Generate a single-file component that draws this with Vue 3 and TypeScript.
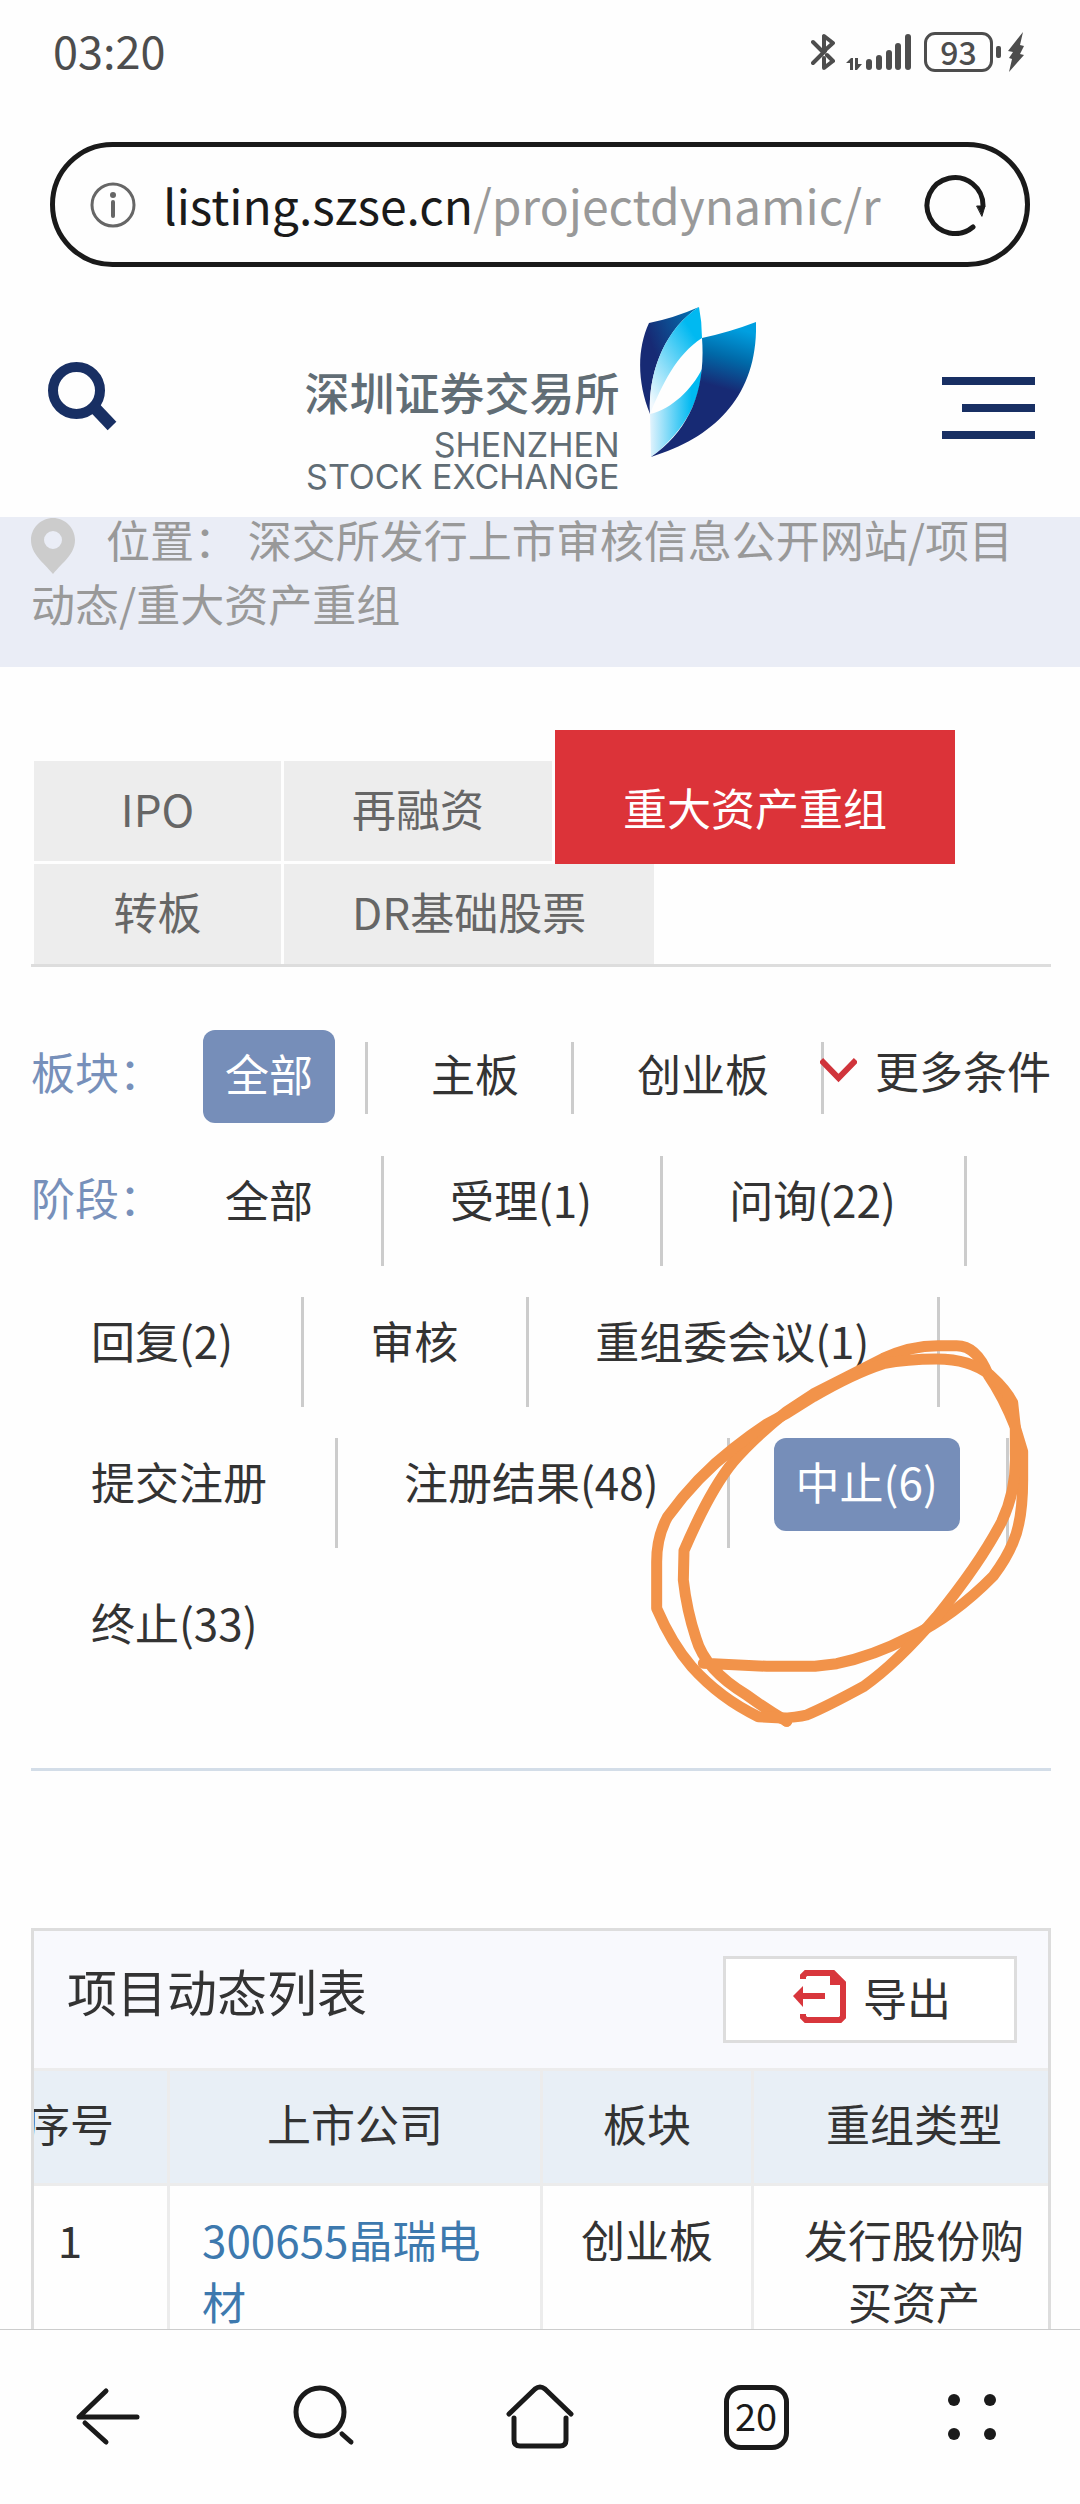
<script setup lang="ts">
import { ref } from 'vue'

interface Stage {
  name: string
  count?: number
}

interface Project {
  index: number
  company: string
  board: string
  kind: string
}

const tabs: string[] = ['IPO', '再融资', '重大资产重组', '转板', 'DR基础股票']
const boards: string[] = ['全部', '主板', '创业板']
const stages: Stage[] = [
  { name: '全部' },
  { name: '受理', count: 1 },
  { name: '问询', count: 22 },
  { name: '回复', count: 2 },
  { name: '审核' },
  { name: '重组委会议', count: 1 },
  { name: '提交注册' },
  { name: '注册结果', count: 48 },
  { name: '中止', count: 6 },
  { name: '终止', count: 33 },
]
const projects: Project[] = [
  { index: 1, company: '300655晶瑞电材', board: '创业板', kind: '发行股份购买资产' },
]

const activeTab = ref('重大资产重组')
const activeBoard = ref('全部')
const activeStage = ref('中止')

const stageLabel = (s: Stage): string => (s.count === undefined ? s.name : `${s.name}(${s.count})`)
</script>

<template>
  <div class="screen">
    <div class="status">
      <span class="clock">03:20</span>
      <div class="indicators">
        <svg class="bluetooth" width="24" height="38" viewBox="0 0 24 38" fill="none" stroke="#4d4d4d" stroke-width="4" stroke-linejoin="round" stroke-linecap="round">
          <path d="M2 9 L12 19 L22 10 L13 3 V17" />
          <path d="M2 30 L14 18 M13 25 V35 L22 28 L16 22" />
        </svg>
        <svg class="signal" width="66" height="38" viewBox="0 0 66 38" fill="#4d4d4d">
          <path d="M0 30 L5 25 H7 V37 H4 V30 Z M9 25 H12 V31 H16 L11 37 H9 Z" />
          <rect x="20" y="26" width="6" height="11" rx="3" />
          <rect x="30" y="22" width="6" height="15" rx="3" />
          <rect x="40" y="17" width="6" height="20" rx="3" />
          <rect x="49" y="10" width="6" height="27" rx="3" />
          <rect x="59" y="1" width="6" height="36" rx="3" />
        </svg>
        <span class="battery">93</span>
        <span class="battery-tip"></span>
        <svg class="bolt" width="16" height="40" viewBox="0 0 16 40" fill="#4d4d4d">
          <path d="M15 0 L0 19 L5 20 L1 26 L4 27 L1 40 L16 23 L12 22 L16 14 L12 13 Z" />
        </svg>
      </div>
    </div>

    <div class="address">
      <button class="round" type="button" aria-label="网站信息">
        <svg width="46" height="46" viewBox="0 0 46 46" fill="none" stroke="#666" stroke-width="3">
          <circle cx="23" cy="23" r="21" />
          <path d="M23 20 V34" stroke-width="4" stroke-linecap="round" />
          <circle cx="23" cy="13" r="3" fill="#666" stroke="none" />
        </svg>
      </button>
      <button class="url" type="button"><span class="host">listing.szse.cn</span>/projectdynamic/r</button>
      <button class="round" type="button" aria-label="刷新">
        <svg width="62" height="62" viewBox="0 0 62 62" fill="none" stroke="#1a1a1a" stroke-width="5" stroke-linecap="round">
          <path d="M49 53 A28 28 0 1 1 59 32" />
          <path d="M53 32 L61 32 L58 42 Z" fill="#1a1a1a" stroke-width="1" />
        </svg>
      </button>
    </div>

    <main class="page">
      <header class="site">
        <button class="site-search" type="button" aria-label="搜索">
          <svg width="70" height="70" viewBox="0 0 70 70" fill="none" stroke="#182f63">
            <circle cx="28.500" cy="28.500" r="23.500" stroke-width="10" />
            <path d="M46 45 L64 64" stroke-width="12" />
          </svg>
        </button>
        <a class="logo" href="#" aria-label="深圳证券交易所">
          <span class="logo-text">
            <span class="logo-cn">深圳证券交易所</span>
            <span class="logo-en">SHENZHEN</span>
            <span class="logo-en">STOCK EXCHANGE</span>
          </span>
          <svg width="116" height="150" viewBox="0 0 116 150">
            <defs>
              <linearGradient id="leafLeft" x1="1" y1="0" x2="0.300" y2="0.500">
                <stop offset="0" stop-color="#0079b8" />
                <stop offset="1" stop-color="#172a74" />
              </linearGradient>
              <linearGradient id="leafSky" x1="0.700" y1="0.150" x2="0.100" y2="0.950">
                <stop offset="0" stop-color="#00b9f1" />
                <stop offset="1" stop-color="#f2f9fe" />
              </linearGradient>
              <linearGradient id="leafLow" x1="0" y1="0" x2="1" y2="0">
                <stop offset="0" stop-color="#e2f3fd" />
                <stop offset="0.800" stop-color="#00b9f1" />
              </linearGradient>
              <linearGradient id="leafRight" x1="0.600" y1="0" x2="0.500" y2="0.450">
                <stop offset="0" stop-color="#009fe0" />
                <stop offset="0.500" stop-color="#0069a8" />
                <stop offset="1" stop-color="#172a74" />
              </linearGradient>
            </defs>
            <path d="M9 16 Q34 11 59 0 C25 22 8 65 10 107 C-3 75 -3 42 9 16 Z" fill="url(#leafLeft)" />
            <path d="M59 0 Q62 15 62 31 C36 48 22 78 10 107 C8 65 25 22 59 0 Z" fill="url(#leafSky)" />
            <path d="M62 62 C52 82 32 102 10 107 L11 150 C40 128 60 98 62 62 Z" fill="url(#leafLow)" />
            <path d="M62 31 Q90 25 116 15 C118 88 76 130 11 150 C48 124 66 86 62 31 Z" fill="url(#leafRight)" />
          </svg>
        </a>
        <button class="site-menu" type="button" aria-label="菜单">
          <span></span><span></span><span></span>
        </button>
      </header>

      <nav class="crumbs">
        <p>
          <svg class="pin" width="44" height="56" viewBox="0 0 44 56"><path fill="#ccc" fill-rule="evenodd" d="M22 0 C10 0 0 10 0 22 C0 36 12 44 22 56 C32 44 44 36 44 22 C44 10 34 0 22 0 Z M22 13 A9 9 0 1 1 22 31 A9 9 0 1 1 22 13 Z" /></svg>位置： <a href="#">深交所发行上市审核信息公开网站</a>/<a href="#">项目动态</a>/<a href="#">重大资产重组</a>
        </p>
      </nav>

      <div class="body">
        <div class="tabs" role="tablist">
          <button
            v-for="t in tabs"
            :key="t"
            type="button"
            role="tab"
            class="tab"
            :class="{ active: t === activeTab }"
            :aria-selected="t === activeTab"
            @click="activeTab = t"
          >{{ t }}</button>
        </div>

        <section class="filters">
          <div class="boards">
            <span class="label">板块：</span>
            <div v-for="b in boards" :key="b" class="option">
              <button type="button" class="chip" :class="{ on: b === activeBoard }" @click="activeBoard = b">{{ b }}</button>
            </div>
            <button class="more" type="button">
              <svg width="37" height="26" viewBox="0 0 37 26" fill="none" stroke="#d0343b" stroke-width="6"><path d="M1 3 L18.500 21 L36 3" /></svg>
              更多条件
            </button>
          </div>
          <div class="stages">
            <span class="label">阶段：</span>
            <div v-for="s in stages" :key="s.name" class="option">
              <button type="button" class="chip" :class="{ on: s.name === activeStage }" @click="activeStage = s.name">{{ stageLabel(s) }}</button>
            </div>
          </div>
          <svg class="scribble" viewBox="0 0 1320 1260" fill="none" stroke="#f2934a" stroke-width="33" stroke-linejoin="round" stroke-linecap="round">
            <path d="M250 1030 L440 1039 H585 L650 1031 Q760 1008 870 951 Q1000 890 1120 768 Q1160 715 1180 665 Q1208 600 1208 480 V395 L1186 322 Q1150 230 1105 165 Q1070 77 1010 77 H955 Q870 77 790 115 L580 222 L500 275 Q400 355 340 425 Q270 510 192 692 L190 780 Q200 870 228 955 Q255 1050 380 1125 Q435 1165 500 1204" />
            <path d="M500 1204 L500 1195 L415 1190 Q300 1135 215 1040 Q155 970 110 865 V725 Q110 650 143 590 Q230 470 340 385 Q390 345 440 312 L500 280 L580 230 Q700 160 790 131 Q860 117 950 117 Q1050 117 1110 165 Q1160 210 1178 248 L1186 322 V400 Q1190 510 1145 605 Q1080 730 950 890 Q830 1030 730 1100 Q620 1160 560 1185 Q530 1192 480 1195" />
          </svg>
        </section>

        <section class="card">
          <div class="card-head">
            <h2>项目动态列表</h2>
            <button class="export" type="button">
              <svg width="54" height="54" viewBox="0 0 54 54" fill="none" stroke="#d8363c" stroke-width="6">
                <path d="M10 9 V6 L13 3 H40 L50 13 V47 L47 50 H13 L10 47 V44" />
                <path d="M38 4 V14 H50 Z" fill="#d8363c" stroke-width="2" />
                <path d="M6 26 H32" />
                <path d="M0 26 L10 16 V37 Z" fill="#d8363c" stroke="none" />
              </svg>
              导出
            </button>
          </div>
          <div class="table-view">
            <table>
              <colgroup>
                <col class="c-index" /><col class="c-company" /><col class="c-board" /><col class="c-kind" />
              </colgroup>
              <thead>
                <tr><th>序号</th><th>上市公司</th><th>板块</th><th>重组类型</th></tr>
              </thead>
              <tbody>
                <tr v-for="p in projects" :key="p.index">
                  <td>{{ p.index }}</td>
                  <td class="company"><a href="#">{{ p.company }}</a></td>
                  <td>{{ p.board }}</td>
                  <td>{{ p.kind }}</td>
                </tr>
              </tbody>
            </table>
          </div>
        </section>
      </div>
    </main>

    <nav class="toolbar">
      <button type="button" aria-label="后退">
        <svg width="64" height="64" viewBox="0 0 64 64" fill="none" stroke="#1a1a1a" stroke-width="5" stroke-linecap="round" stroke-linejoin="round">
          <path d="M61 32 H3 L30 6 M9 38 L30 57" />
        </svg>
      </button>
      <button type="button" aria-label="搜索">
        <svg width="64" height="64" viewBox="0 0 64 64" fill="none" stroke="#1a1a1a" stroke-width="5" stroke-linecap="round">
          <circle cx="28" cy="27" r="24" /><path d="M50 49 L59 57" />
        </svg>
      </button>
      <button type="button" aria-label="主页">
        <svg width="68" height="66" viewBox="0 0 68 66" fill="none" stroke="#1a1a1a" stroke-width="5" stroke-linecap="round" stroke-linejoin="round">
          <path d="M3 30 L29 5 Q34 1 39 5 L65 30 M8 34 V56 Q8 62 14 62 H54 Q60 62 60 56 V34" />
        </svg>
      </button>
      <button type="button" aria-label="标签页"><span class="tab-count">20</span></button>
      <button type="button" aria-label="更多">
        <svg width="48" height="48" viewBox="0 0 48 48" fill="#1a1a1a">
          <circle cx="6" cy="7" r="6" /><circle cx="42" cy="7" r="6" /><circle cx="6" cy="41" r="6" /><circle cx="42" cy="41" r="6" />
        </svg>
      </button>
    </nav>
  </div>
</template>

<style>
body {
  margin: 0;
  background: #fefefe;
}
</style>

<style scoped>
* {
  box-sizing: border-box;
}
.screen {
  display: flex;
  flex-direction: column;
  height: 100vh;
  overflow: hidden;
  background: #fefefe;
  color: #333;
  font-family: "Noto Sans CJK SC", "Noto Sans", sans-serif;
  font-size: 44px;
}
button {
  border: 0;
  padding: 0;
  background: none;
  color: inherit;
  font: inherit;
}
a {
  color: inherit;
  text-decoration: none;
}
svg {
  display: block;
  flex: none;
}
.status {
  flex: none;
  display: flex;
  justify-content: space-between;
  align-items: center;
  height: 104px;
  padding: 0 56px 0 53px;
  color: #4d4d4d;
}
.clock {
  padding-bottom: 6px;
  font-size: 45px;
}
.indicators {
  display: flex;
  align-items: center;
}
.signal {
  margin: 0 12px 0 11px;
}
.battery {
  width: 69px;
  height: 40px;
  border: 3px solid #4d4d4d;
  border-radius: 11px;
  font-size: 32px;
  font-weight: 500;
  line-height: 32px;
  text-align: center;
}
.battery-tip {
  width: 5px;
  height: 12px;
  margin: 0 7px 0 3px;
  border-radius: 2px;
  background: #4d4d4d;
}
.address {
  flex: none;
  display: flex;
  align-items: center;
  height: 125px;
  margin: 38px 50px 0;
  padding: 0 39px 0 35px;
  border: 5px solid #1a1a1a;
  border-radius: 63px;
}
.round {
  flex: none;
}
.url {
  flex: 1;
  min-width: 0;
  overflow: hidden;
  margin: 0 20px 0 27px;
  padding-bottom: 2px;
  color: #999;
  font-size: 48px;
  line-height: 70px;
  text-align: left;
  white-space: nowrap;
}
.host {
  color: #1a1a1a;
}
.page {
  flex: 1;
  min-height: 0;
  overflow: hidden;
}
.site {
  display: flex;
  justify-content: space-between;
  align-items: flex-start;
  height: 250px;
  padding: 40px 45px 0 48px;
}
.site-search {
  margin-top: 55px;
}
.logo {
  display: flex;
  gap: 20px;
}
.logo-text {
  display: flex;
  flex-direction: column;
  align-items: flex-end;
  margin-top: 59px;
  color: #616d75;
}
.logo-cn {
  margin-bottom: 11px;
  font-size: 45px;
  font-weight: 500;
  line-height: 52px;
}
.logo-en {
  font-family: Inter, sans-serif;
  font-size: 34px;
  line-height: 32px;
}
.site-menu {
  display: flex;
  flex-direction: column;
  align-items: flex-end;
  gap: 19px;
  width: 93px;
  margin-top: 70px;
}
.site-menu span {
  width: 100%;
  height: 8px;
  background: #182f63;
}
.site-menu span:nth-child(2) {
  width: 73px;
}
.crumbs {
  height: 150px;
  padding: 0 29px 0 31px;
  background: #eaedf6;
  color: #999;
}
.crumbs p {
  margin: 0;
  position: relative;
  top: -10px;
  line-height: 64px;
}
.pin {
  display: inline-block;
  margin: -8px 31px -8px 0;
  vertical-align: middle;
}
.body {
  padding: 63px 29px 0 31px;
}
.tabs {
  display: flex;
  flex-wrap: wrap;
  align-items: flex-end;
  column-gap: 3px;
  padding-left: 3px;
  border-bottom: 3px solid #ddd;
}
.tab {
  min-width: 247px;
  height: 100px;
  margin-bottom: 3px;
  padding: 0 68px 7px;
  background: #ededed;
  color: #666;
}
.tab:nth-child(n + 4) {
  margin-bottom: 0;
}
.tab.active {
  height: 134px;
  margin-bottom: 0;
  padding-top: 27px;
  background: #dc3339;
  color: #fff;
}
.filters {
  position: relative;
  height: 804px;
  padding-top: 63px;
  border-bottom: 3px solid #d3dde8;
}
.boards,
.stages {
  display: flex;
  align-items: flex-start;
  margin-left: -6px;
}
.boards {
  position: relative;
  margin-bottom: 33px;
}
.stages {
  flex-wrap: wrap;
  row-gap: 31px;
}
.label {
  width: 134px;
  padding-left: 6px;
  color: #7790ba;
  line-height: 82px;
  white-space: nowrap;
}
.option {
  display: flex;
  align-items: flex-start;
  height: 110px;
  padding: 0 46px 0 44px;
  border-right: 3px solid #ccc;
}
.option:last-child {
  border-right-color: transparent;
}
.chip {
  height: 93px;
  padding: 0 22px 8px;
  border-radius: 12px;
  white-space: nowrap;
}
.chip.on {
  background: #768eb9;
  color: #fff;
}
.boards .label {
  width: 137px;
}
.boards .option {
  height: 72px;
  margin: 12px 0 9px;
  padding: 0 30px 0 41px;
}
.boards .chip {
  margin-top: -12px;
}
.more {
  position: absolute;
  right: 0;
  top: 0;
  display: flex;
  align-items: center;
  gap: 18px;
  height: 80px;
}
.scribble {
  position: absolute;
  top: 353px;
  left: 589px;
  width: 440px;
  height: 420px;
  pointer-events: none;
}
.card {
  margin-top: 157px;
  border: 3px solid #ddd;
}
.card-head {
  display: flex;
  justify-content: space-between;
  align-items: center;
  height: 137px;
  padding: 0 31px 0 33px;
  background: #f8f9fd;
}
h2 {
  margin: 0 0 20px;
  font-size: 50px;
  font-weight: 400;
  line-height: 70px;
}
.export {
  display: flex;
  justify-content: center;
  align-items: center;
  gap: 16px;
  width: 294px;
  height: 87px;
  padding: 0 0 6px 4px;
  border: 3px solid #ddd;
  background: #fff;
}
.table-view {
  overflow: hidden;
}
table {
  width: 1104px;
  margin-left: -61px;
  border-collapse: separate;
  border-spacing: 0;
  table-layout: fixed;
}
.c-index {
  width: 197px;
}
.c-company {
  width: 373px;
}
.c-board {
  width: 211px;
}
.c-kind {
  width: 323px;
}
th,
td {
  border-right: 3px solid #ececec;
  border-bottom: 3px solid #ececec;
  font-weight: 400;
  line-height: 62px;
  text-align: center;
}
th {
  height: 118px;
  padding: 0 32px 8px;
  border-top: 3px solid #ececec;
  background: #e8eff6;
}
td {
  padding: 22px 32px 24px;
  vertical-align: top;
}
.company {
  color: #3d79ae;
  text-align: left;
}
.toolbar {
  flex: none;
  display: flex;
  height: 175px;
  border-top: 1px solid #ccc;
}
.toolbar button {
  flex: 1;
  display: flex;
  justify-content: center;
  align-items: center;
}
.tab-count {
  width: 65px;
  height: 65px;
  border: 5px solid #1a1a1a;
  border-radius: 17px;
  color: #1a1a1a;
  font-size: 38px;
  line-height: 50px;
}
</style>
